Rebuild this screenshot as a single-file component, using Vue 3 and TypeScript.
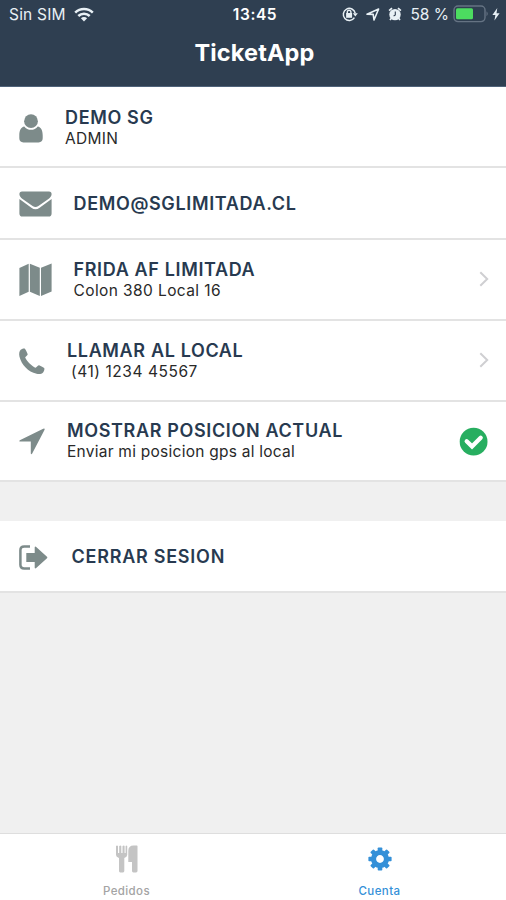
<script setup lang="ts">
import { ref } from 'vue'

type IconName = 'user' | 'mail' | 'map' | 'phone' | 'arrow' | 'exit'
interface Row {
  id: string
  icon: IconName
  title: string
  subtitle?: string
  trailing?: 'chevron' | 'check'
}

const account: Row[] = [
  { id: 'profile', icon: 'user', title: 'DEMO SG', subtitle: 'ADMIN' },
  { id: 'email', icon: 'mail', title: 'DEMO@SGLIMITADA.CL' },
  { id: 'address', icon: 'map', title: 'FRIDA AF LIMITADA', subtitle: 'Colon 380 Local 16', trailing: 'chevron' },
  { id: 'call', icon: 'phone', title: 'LLAMAR AL LOCAL', subtitle: '(41) 1234 45567', trailing: 'chevron' },
  { id: 'position', icon: 'arrow', title: 'MOSTRAR POSICION ACTUAL', subtitle: 'Enviar mi posicion gps al local', trailing: 'check' },
]
const session: Row[] = [{ id: 'logout', icon: 'exit', title: 'CERRAR SESION' }]
const groups = [account, session]

const activeTab = ref<'pedidos' | 'cuenta'>('cuenta')
</script>

<template>
  <div class="screen">
    <header class="header">
      <div class="status">
        <div class="status-left">
          <span class="carrier">Sin SIM</span>
          <svg class="wifi" width="20" height="14" viewBox="0 0 20 14" fill="none" stroke="currentColor" stroke-width="2.5">
            <path d="M1.2 4.7A12.6 12.6 0 0 1 18.8 4.7" />
            <path d="M4.3 8A8.2 8.2 0 0 1 15.7 8" />
            <path d="M6.9 10.3A4.4 4.4 0 0 1 13.1 10.3L10 13.6Z" fill="currentColor" stroke="none" />
          </svg>
        </div>
        <span class="clock">13:45</span>
        <div class="status-right">
          <svg class="lock" width="16" height="14" viewBox="0 0 16 14" fill="none" stroke="currentColor">
            <path d="M12.4 10.6A6 6 0 1 1 13.2 6.2" stroke-width="1.5" />
            <path d="M10.8 6.2H15.8L13.3 9.4Z" fill="currentColor" stroke="none" />
            <rect x="4.1" y="6" width="6" height="4.8" fill="currentColor" stroke="none" />
            <path d="M5.3 6.2V5A1.8 1.8 0 0 1 8.9 5V6.2" stroke-width="1.4" />
          </svg>
          <svg class="locate" width="14" height="13" viewBox="0 0 14 13" fill="none" stroke="currentColor" stroke-width="1.6" stroke-linejoin="round">
            <path d="M1 6.2L12.6 1L8 12L7.2 6.4Z" />
          </svg>
          <svg class="alarm" width="14" height="14" viewBox="0 0 14 14">
            <circle cx="7" cy="7.6" r="5.7" fill="currentColor" />
            <path d="M1.1 3.7L4 1.1M12.9 3.7L10 1.1M3.4 11.3L2 13M10.6 11.3L12 13" stroke="currentColor" stroke-width="1.7" fill="none" />
            <path d="M7.3 4.5V8L5.6 8.9" class="hands" />
          </svg>
          <span class="percent">58 %</span>
          <svg class="battery" width="37" height="18" viewBox="0 0 37 18">
            <rect x="1" y="1" width="31" height="15.6" rx="4" class="shell" />
            <rect x="3" y="3.3" width="17" height="11" rx="1.5" class="charge" />
            <path d="M33.5 6.3Q36 8.8 33.5 11.3Z" class="nub" />
          </svg>
          <svg class="bolt" width="8" height="13" viewBox="0 0 8 13"><path d="M5.3 0L.4 7H3.4L2.4 12.5L7.6 5.3H4.5Z" fill="currentColor" /></svg>
        </div>
      </div>
      <h1 class="heading">TicketApp</h1>
    </header>

    <main class="content">
      <section v-for="(group, index) in groups" :key="index" class="group">
        <div v-for="row in group" :key="row.id" class="row" :class="[row.id, { double: row.subtitle }]">
          <span class="icon">
            <svg v-if="row.icon === 'user'" width="24" height="29" viewBox="0 0 24 29">
              <path d="M5.3 12.4C2 13 .3 16.4.3 21.4V24.3C.3 26.9 1.8 28.4 4.4 28.4H19.6C22.2 28.4 23.7 26.9 23.7 24.3V21.4C23.7 16.4 22 13 18.7 12.4A8.3 8.3 0 0 1 5.3 12.4Z" />
              <circle cx="12" cy="7.2" r="6.9" />
            </svg>
            <svg v-else-if="row.icon === 'mail'" width="33" height="26" viewBox="0 0 33 26">
              <path d="M3 .5H30Q32.6.5 32.6 3.2C32.6 5 31.2 6.8 29.4 8L19.4 15Q16.5 17 13.6 15L3.6 8C1.8 6.8.4 5 .4 3.2Q.4.5 3 .5Z" />
              <path d="M.4 8L12.4 16.7Q16.5 19.7 20.6 16.7L32.6 8V22.4Q32.6 25.5 29.6 25.5H3.4Q.4 25.5.4 22.4Z" />
            </svg>
            <svg v-else-if="row.icon === 'map'" width="33" height="34" viewBox="0 0 33 34">
              <path d="M.4 5L9.7.8V28.8L.4 33Z" /><path d="M10.9.8L20.8 4.8V33L10.9 28.8Z" /><path d="M22 4.8L32.6.5V28.5L22 33Z" />
            </svg>
            <svg v-else-if="row.icon === 'phone'" width="26" height="27" viewBox="0 0 26 27">
              <path d="M2 1.6C3.2.7 5.4.2 5.9.8C6.8 2 7.8 4.2 8.6 5.9C9.2 7.3 5.9 8.5 6.3 9.7C7.6 12.9 13.1 18.4 16.3 19.7C17.5 20.1 18.7 16.7 20.1 17.3C22 18.2 24.5 19.4 25.2 20.1C25.9 20.9 24.9 23.6 24.1 24.5C22.7 26 20.1 26.5 17.6 25.8C9 23.5 2.7 17.1.5 8.7C-.2 6.1.2 2.9 2 1.6Z" />
            </svg>
            <svg v-else-if="row.icon === 'arrow'" width="26" height="27" viewBox="0 0 26 27">
              <path d="M24.2.7Q26 0 25.6 1.8L13.2 25.5Q11.8 27.2 11.8 25V13.6H1.1Q-.7 13.3.8 12.2Z" />
            </svg>
            <svg v-else width="29" height="25" viewBox="0 0 29 25">
              <path d="M11 1.5H5.2Q1.4 1.5 1.4 5.2V19.8Q1.4 23.5 5.2 23.5H11" class="bracket" />
              <path d="M7.3 8.1H15.7V2.2Q16 .8 17.2 1.9L28 11.7Q28.8 12.5 28 13.3L17.2 23.1Q16 24.2 15.7 22.8V17H7.3Z" />
            </svg>
          </span>
          <div class="labels">
            <div class="title"><span>{{ row.title }}</span></div>
            <div v-if="row.subtitle" class="subtitle"><span>{{ row.subtitle }}</span></div>
          </div>
          <svg v-if="row.trailing === 'chevron'" class="chevron" width="10" height="16" viewBox="0 0 10 16"><path d="M1.3 1.2L8.2 8L1.3 14.8" /></svg>
          <svg v-else-if="row.trailing === 'check'" class="check" width="28" height="28" viewBox="0 0 28 28">
            <circle cx="13.6" cy="13.7" r="13.9" /><path d="M6.7 13.3L12 18.4L20.7 9.7" />
          </svg>
        </div>
      </section>
    </main>

    <nav class="tabs">
      <button class="tab" :class="{ active: activeTab === 'pedidos' }" @click="activeTab = 'pedidos'">
        <svg width="22" height="28" viewBox="0 0 22 28" fill="currentColor">
          <path d="M0 1Q1 0 2 1V8H3.2V1Q4.5 0 5.3 1V8H6.5V1Q8 0 8.6 1V8H9.6V1Q10.5 0 11.2 1V10Q11.2 12 8.3 13V26Q8.3 27.4 7 27.4H4.3Q3 27.4 3 26V13Q0 12 0 10Z" />
          <path d="M21.5 1V26Q21.5 27.4 20 27.4H17.4Q16 27.4 16 26V17H12.3V6Q12.3.5 17.5.5H21Z" />
        </svg>
        <span>Pedidos</span>
      </button>
      <button class="tab" :class="{ active: activeTab === 'cuenta' }" @click="activeTab = 'cuenta'">
        <svg width="24" height="28" viewBox="-12 -14 24 28" fill="currentColor">
          <g>
            <rect v-for="n in 8" :key="n" x="-2.3" y="-11.6" width="4.6" height="6" rx=".8" :transform="`rotate(${n * 45})`" />
          </g>
          <circle r="6.5" fill="none" stroke="currentColor" stroke-width="5.2" />
        </svg>
        <span>Cuenta</span>
      </button>
    </nav>
  </div>
</template>

<style>
body { margin: 0; }
</style>

<style scoped>
.screen { width: 506px; height: 900px; display: flex; flex-direction: column; overflow: hidden; background: #f0f0f0; font-family: Inter, Roboto, sans-serif; }
svg { display: block; flex: none; overflow: visible; }
.header { height: 87px; flex: none; box-sizing: border-box; background: #2f3f51; border-bottom: 1px solid #50637a; color: #fff; }
.status { height: 29px; display: grid; grid-template-columns: 1fr auto 1fr; align-items: center; color: #e8f0f5; font-size: 15.5px; line-height: 29px; }
.status-left, .status-right { display: flex; align-items: center; }
.status-left { padding-left: 9px; }
.carrier { letter-spacing: .2px; }
.wifi { margin-left: 8px; }
.clock { font-weight: 600; letter-spacing: .6px; color: #fff; padding-left: 4px; }
.status-right { justify-content: flex-end; padding-right: 6px; }
.lock { margin-top: -1px; }
.locate { margin-left: 8px; }
.alarm { margin: -1px 0 0 8px; }
.hands { fill: none; stroke: #2f3e50; stroke-width: 1.1; }
.percent { margin-left: 8px; white-space: nowrap; }
.battery { margin: -1px 0 0 4px; }
.bolt { margin-left: 2px; }
.shell { fill: none; stroke: #657383; stroke-width: 1.4; }
.charge { fill: #4cdc60; }
.nub { fill: #657383; }
.heading { margin: 8px 0 0; padding-left: 3px; text-align: center; font-size: 23.5px; line-height: 31px; font-weight: 700; letter-spacing: .15px; }
.content { flex: 1; }
.group + .group { margin-top: 39px; }
.row { height: 71.5px; box-sizing: border-box; display: flex; align-items: center; padding: 2px 18px 0 19px; background: #fff; border-bottom: 2px solid #e3e3e3; }
.row.double { height: 81px; }
.row.profile, .row.logout { padding-top: 3px; }
.row.position { height: 80.5px; }
.icon svg { fill: #7d8b8a; }
.bracket { fill: none; stroke: #7d8b8a; stroke-width: 2.5; }
.labels { flex: 1; white-space: nowrap; }
.title { color: #283a50; font-size: 18px; line-height: 22px; font-weight: 600; letter-spacing: .64px; }
.subtitle { color: #292929; font-size: 15.5px; line-height: 19px; padding-bottom: 2px; letter-spacing: .3px; }
.profile .labels { margin-left: 22px; }
.email .labels, .address .labels { margin-left: 21.5px; }
.address .subtitle { letter-spacing: .4px; }
.call .labels, .position .labels { margin-left: 22px; }
.call .subtitle { padding-left: 4px; letter-spacing: .55px; }
.position .subtitle { letter-spacing: .25px; }
.logout .labels { margin-left: 23.5px; }
.logout .title { letter-spacing: .75px; }
.chevron { margin: -2px -1px 0 0; }
.chevron path { fill: none; stroke: #cfcfd2; stroke-width: 2; }
.check circle { fill: #27ae60; }
.check path { fill: none; stroke: #fff; stroke-width: 4.3; stroke-linecap: round; }
.tabs { height: 67px; flex: none; box-sizing: border-box; border-top: 1px solid #dedede; background: #fff; display: grid; grid-template-columns: 1fr 1fr; }
.tab { border: 0; padding: 11px 0 0; background: none; color: #c4c4c4; font: 500 11.5px/16px Inter, sans-serif; letter-spacing: .4px; display: flex; flex-direction: column; align-items: center; gap: 10px; }
.tab span { color: #a4a4a4; }
.tab.active, .tab.active span { color: #3490d8; }
</style>
